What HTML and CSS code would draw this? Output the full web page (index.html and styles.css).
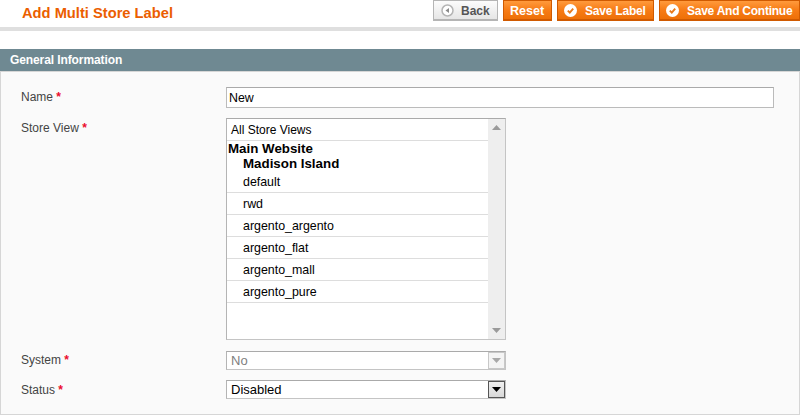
FILE: index.html
```html
<!DOCTYPE html>
<html lang="en">
<head>
    <meta charset="UTF-8">
    <meta name="viewport" content="width=device-width, initial-scale=1.0">
    <title>Add Multi Store Label</title>
    <link rel="stylesheet" href="styles.css">
</head>
<body>
    <div class="page_head">
        <h3>Add Multi Store Label</h3>
        <div class="actions">
            <button type="button" class="btn btn_back">
                <svg class="ico" width="13" height="13" viewBox="0 0 13 13"><circle cx="6.5" cy="6.5" r="5.5" fill="#fff" stroke="#b5b5b5" stroke-width="1.5"/><path d="M8 4v5L4.5 6.5z" fill="#8a8a8a"/></svg>
                Back
            </button>
            <button type="button" class="btn btn_reset">Reset</button>
            <button type="button" class="btn btn_save">
                <svg class="ico" width="13" height="13" viewBox="0 0 13 13"><circle cx="6.5" cy="6.5" r="6.5" fill="#fff"/><path d="M3.8 6.6l2 2 3.4-4" fill="none" stroke="#e87a1c" stroke-width="1.9"/></svg>
                Save Label
            </button>
            <button type="button" class="btn btn_continue">
                <svg class="ico" width="13" height="13" viewBox="0 0 13 13"><circle cx="6.5" cy="6.5" r="6.5" fill="#fff"/><path d="M3.8 6.6l2 2 3.4-4" fill="none" stroke="#e87a1c" stroke-width="1.9"/></svg>
                Save And Continue
            </button>
        </div>
    </div>

    <div class="section_head">General Information</div>
    <div class="fieldset">
        <div class="row">
            <label>Name <span class="req">*</span></label>
            <input type="text" class="text_input" value="New">
        </div>
        <div class="row">
            <label>Store View <span class="req">*</span></label>
            <div class="listbox">
                <div class="list_items">
                    <div class="opt opt_all">All Store Views</div>
                    <div class="grp">Main Website</div>
                    <div class="grp grp_sub">Madison Island</div>
                    <div class="opt">default</div>
                    <div class="opt">rwd</div>
                    <div class="opt">argento_argento</div>
                    <div class="opt">argento_flat</div>
                    <div class="opt">argento_mall</div>
                    <div class="opt">argento_pure</div>
                </div>
                <div class="scroll">
                    <svg width="9" height="5" viewBox="0 0 9 5"><path d="M4.5 0L9 5H0z" fill="#9a9a9a"/></svg>
                    <svg width="9" height="5" viewBox="0 0 9 5"><path d="M0 0h9L4.5 5z" fill="#9a9a9a"/></svg>
                </div>
            </div>
        </div>
        <div class="row row_system">
            <label>System <span class="req">*</span></label>
            <div class="select select_off">
                <span>No</span>
                <div class="arrow"><svg width="9" height="5" viewBox="0 0 9 5"><path d="M0 0h9L4.5 5z" fill="#a8a8a8"/></svg></div>
            </div>
        </div>
        <div class="row">
            <label>Status <span class="req">*</span></label>
            <div class="select">
                <span>Disabled</span>
                <div class="arrow"><svg width="9" height="5" viewBox="0 0 9 5"><path d="M0 0h9L4.5 5z" fill="#000"/></svg></div>
            </div>
        </div>
    </div>
</body>
</html>
```

FILE: styles.css
```css
* {
    box-sizing: border-box;
    margin: 0;
    padding: 0;
}
body {
    font-family: "Liberation Sans", Arial, sans-serif;
    font-size: 12px;
    color: #2f2f2f;
    background-color: #fff;
    overflow: hidden;
}
.page_head {
    height: 31px;
    border-bottom: 4px solid #dfdfdf;
    padding-left: 22px;
    display: flex;
    justify-content: space-between;
    margin-bottom: 18px;
}
.page_head h3 {
    font-size: 14.7px;
    line-height: 27px;
    color: #eb5e00;
}
.actions {
    display: flex;
    gap: 5px;
    height: 21px;
}
.btn {
    font-family: inherit;
    font-size: 12px;
    font-weight: bold;
    color: #fff;
    display: flex;
    align-items: center;
    gap: 8px;
    height: 21px;
    padding: 1px 0 0 6px;
    border: 1px solid #d05a00;
    border-bottom-width: 2px;
    background: linear-gradient(#ff9a3c, #f77c16 50%, #ee7008);
    white-space: nowrap;
}
.btn_back {
    color: #555;
    width: 65px;
    gap: 7px;
    padding-left: 7px;
    border: 1px solid #b5b5b5;
    border-bottom-width: 2px;
    background: linear-gradient(#fcfcfc, #e6e6e6);
}
.btn_reset {
    width: 49px;
    font-size: 12.6px;
}
.btn_save {
    width: 97px;
    letter-spacing: -0.2px;
}
.btn_continue {
    width: 141px;
    letter-spacing: -0.25px;
}
.section_head {
    height: 23px;
    background-color: #6f8992;
    border-bottom: 1px solid #d6d6d6;
    color: #fff;
    font-weight: bold;
    letter-spacing: -0.1px;
    line-height: 22px;
    padding-left: 10px;
}
.fieldset {
    height: 343px;
    background-color: #fafafa;
    border: 1px solid #d6d6d6;
    border-top: 0;
    padding: 15px 0 0 20px;
    display: flex;
    flex-direction: column;
    gap: 10px;
}
.row {
    display: flex;
    align-items: flex-start;
}
.row label {
    width: 205px;
    line-height: 20px;
    color: #444;
}
.row_system label {
    line-height: 18px;
}
.req {
    color: #eb0a2d;
    font-weight: bold;
}
.text_input {
    width: 548px;
    height: 21px;
    font-family: inherit;
    font-size: 12.4px;
    color: #000;
    padding: 0 2px;
    border: 1px solid #bbb;
    border-top-color: #aaa;
    outline: 0;
    background-color: #fff;
}
.listbox {
    width: 280px;
    height: 222px;
    margin-bottom: 1px;
    display: flex;
    border: 1px solid #c4c4c4;
    border-top-color: #aaa;
    border-left-color: #b4b4b4;
    background-color: #fff;
    color: #000;
}
.list_items {
    flex: 1;
}
.opt {
    height: 22px;
    line-height: 23px;
    font-size: 12.4px;
    padding-left: 16px;
    border-bottom: 1px solid #ddd;
}
.opt_all {
    font-size: 12px;
    padding-left: 4px;
}
.grp {
    height: 15px;
    line-height: 16px;
    font-weight: bold;
    font-size: 13.33px;
    padding-left: 1px;
}
.grp_sub {
    padding-left: 16px;
}
.scroll {
    width: 17px;
    background-color: #eee;
    display: flex;
    flex-direction: column;
    justify-content: space-between;
    align-items: center;
    padding: 6px 0;
}
.select {
    width: 280px;
    height: 19px;
    font-size: 13px;
    display: flex;
    justify-content: space-between;
    align-items: center;
    padding-left: 4px;
    border: 1px solid #c4c4c4;
    border-top-color: #aaa;
    border-left-color: #b4b4b4;
    background-color: #fff;
    color: #000;
}
.select span {
    line-height: 17px;
}
.select_off {
    color: #808080;
}
.arrow {
    width: 17px;
    height: 17px;
    display: flex;
    align-items: center;
    justify-content: center;
    border: 1px solid #555;
    background: linear-gradient(#f0f0f0, #d8d8d8);
}
.select_off .arrow {
    border-color: #c8c8c8;
    background: #f4f4f4;
}
```
